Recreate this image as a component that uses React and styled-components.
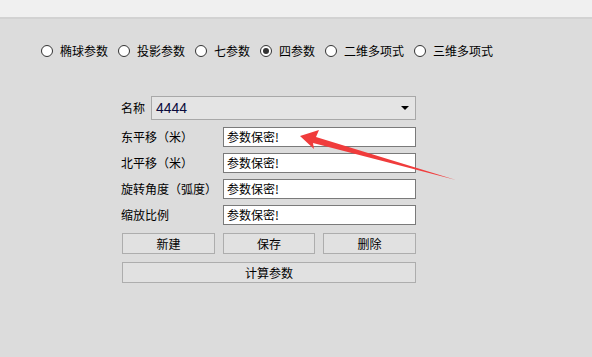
import React from "react";
import styled, { createGlobalStyle } from "styled-components";

const GlobalStyle = createGlobalStyle`
  html, body {
    margin: 0;
    padding: 0;
    background: #dcdcdc;
  }
  body {
    font-family: "Noto Sans CJK SC", "Liberation Sans", sans-serif;
    font-size: 12px;
    color: #000;
  }
`;

const options = ["椭球参数", "投影参数", "七参数", "四参数", "二维多项式", "三维多项式"];

const fields = [
  { label: "东平移（米）", value: "参数保密!" },
  { label: "北平移（米）", value: "参数保密!" },
  { label: "旋转角度（弧度）", value: "参数保密!" },
  { label: "缩放比例", value: "参数保密!" },
];

function App() {
  return (
    <Page>
      <GlobalStyle />
      <TopBar />
      <RadioRow>
        {options.map((o) => (
          <RadioItem key={o}>
            <Circle $checked={o === "四参数"} />
            {o}
          </RadioItem>
        ))}
      </RadioRow>
      <Form>
        <ComboRow>
          <Label>名称</Label>
          <Combo>
            <span>4444</span>
            <Caret />
          </Combo>
        </ComboRow>
        {fields.map((f) => (
          <FieldRow key={f.label}>
            <Label>{f.label}</Label>
            <Input>{f.value}</Input>
          </FieldRow>
        ))}
        <Buttons>
          <Button>新建</Button>
          <Button>保存</Button>
          <Button>删除</Button>
        </Buttons>
        <Button $wide>计算参数</Button>
      </Form>
      <Arrow width="592" height="357" viewBox="0 0 592 357">
        <polygon points="300,136 319,130 316,137 456,180 313,143 314,149" fill="#f03c3c" />
      </Arrow>
    </Page>
  );
}

const Page = styled.div`
  position: relative;
  width: 592px;
  height: 357px;
  overflow: hidden;
  background: #dcdcdc;
`;

const TopBar = styled.div`
  height: 17px;
  background: #f0f0f0;
  border-bottom: 2px solid #d2d2d2;
`;

const RadioRow = styled.div`
  display: flex;
  align-items: center;
  gap: 10px;
  padding: 23px 0 0 41px;
  height: 18px;
`;

const RadioItem = styled.label`
  display: flex;
  align-items: center;
  gap: 7px;
  line-height: 18px;
`;

const Circle = styled.span`
  width: 10px;
  height: 10px;
  border-radius: 50%;
  border: 1px solid #333;
  background: #fff;
  position: relative;
  &::after {
    content: "";
    display: ${(p) => (p.$checked ? "block" : "none")};
    position: absolute;
    left: 2px;
    top: 2px;
    width: 6px;
    height: 6px;
    border-radius: 50%;
    background: #333;
  }
`;

const Form = styled.div`
  width: 295px;
  margin: 35px 0 0 121px;
  display: flex;
  flex-direction: column;
`;

const ComboRow = styled.div`
  display: flex;
  align-items: center;
  height: 26px;
  margin-bottom: 6px;
`;

const Label = styled.span`
  width: 30px;
  line-height: 20px;
  white-space: nowrap;
`;

const Combo = styled.div`
  flex: 1;
  height: 24px;
  box-sizing: border-box;
  border: 1px solid #a8a8a8;
  background: #e4e4e4;
  display: flex;
  align-items: center;
  justify-content: space-between;
  padding: 0 6px 0 4px;
  font-family: "Liberation Sans", sans-serif;
  font-size: 14px;
  color: #0a0a3c;
`;

const Caret = styled.span`
  width: 0;
  height: 0;
  border-left: 4px solid transparent;
  border-right: 4px solid transparent;
  border-top: 4px solid #000;
`;

const FieldRow = styled.div`
  display: grid;
  grid-template-columns: 102px 1fr;
  align-items: center;
  height: 20px;
  margin-bottom: 6px;
`;

const Input = styled.div`
  height: 20px;
  box-sizing: border-box;
  border: 1px solid #7a7a7a;
  background: #fff;
  padding: 0 3px;
  line-height: 18px;
`;

const Buttons = styled.div`
  display: grid;
  grid-template-columns: 93px 92px 93px;
  gap: 8px;
  margin: 2px 0 8px 1px;
`;

const Button = styled.button`
  height: 21px;
  box-sizing: border-box;
  border: 1px solid #adadad;
  background: #e1e1e1;
  font-family: inherit;
  font-size: 12px;
  padding: 0;
  color: #000;
  width: ${(p) => (p.$wide ? "294px" : "auto")};
  margin-left: ${(p) => (p.$wide ? "1px" : "0")};
`;

const Arrow = styled.svg`
  position: absolute;
  left: 0;
  top: 0;
  pointer-events: none;
`;

export default App;
